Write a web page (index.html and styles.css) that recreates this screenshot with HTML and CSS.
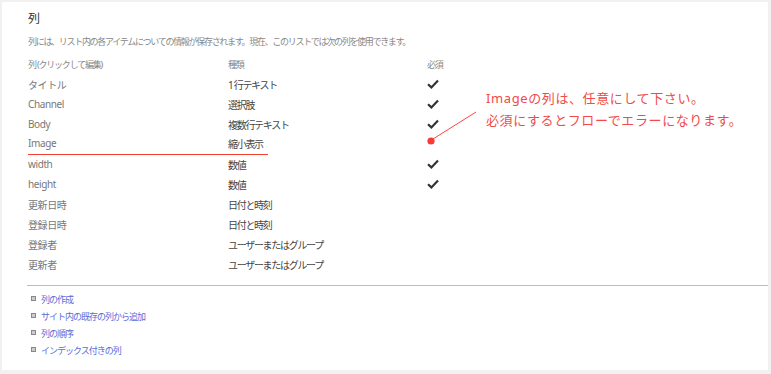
FILE: index.html
```html
<!DOCTYPE html>
<html lang="ja">
<head>
  <meta charset="utf-8">
  <title>列</title>
  <link rel="stylesheet" href="styles.css">
</head>
<body>
  <div class="panel">
    <h2 class="title">列</h2>
    <p class="desc">列には、リスト内の各アイテムについての情報が保存されます。現在、このリストでは次の列を使用できます。</p>

    <div class="cols">
      <div class="row head"><span class="name">列 (クリックして編集)</span><span class="type">種類</span><span class="req">必須</span></div>
      <div class="row"><span class="name">タイトル</span><span class="type">1 行テキスト</span><span class="req"><svg class="check" viewBox="0 0 12 10"><path d="M1 5.2 L4.4 8.4 L11 1.6"/></svg></span></div>
      <div class="row"><span class="name">Channel</span><span class="type">選択肢</span><span class="req"><svg class="check" viewBox="0 0 12 10"><path d="M1 5.2 L4.4 8.4 L11 1.6"/></svg></span></div>
      <div class="row"><span class="name">Body</span><span class="type">複数行テキスト</span><span class="req"><svg class="check" viewBox="0 0 12 10"><path d="M1 5.2 L4.4 8.4 L11 1.6"/></svg></span></div>
      <div class="row marked"><span class="name">Image</span><span class="type">縮小表示</span><span class="req"></span></div>
      <div class="row"><span class="name">width</span><span class="type">数値</span><span class="req"><svg class="check" viewBox="0 0 12 10"><path d="M1 5.2 L4.4 8.4 L11 1.6"/></svg></span></div>
      <div class="row"><span class="name">height</span><span class="type">数値</span><span class="req"><svg class="check" viewBox="0 0 12 10"><path d="M1 5.2 L4.4 8.4 L11 1.6"/></svg></span></div>
      <div class="row"><span class="name">更新日時</span><span class="type">日付と時刻</span><span class="req"></span></div>
      <div class="row"><span class="name">登録日時</span><span class="type">日付と時刻</span><span class="req"></span></div>
      <div class="row"><span class="name">登録者</span><span class="type">ユーザーまたはグループ</span><span class="req"></span></div>
      <div class="row"><span class="name">更新者</span><span class="type">ユーザーまたはグループ</span><span class="req"></span></div>
    </div>

    <hr class="rule">

    <ul class="links">
      <li><a href="#">列の作成</a></li>
      <li><a href="#">サイト内の既存の列から追加</a></li>
      <li><a href="#">列の順序</a></li>
      <li><a href="#">インデックス付きの列</a></li>
    </ul>

    <svg class="pointer" width="60" height="40" viewBox="0 0 60 40">
      <line x1="7" y1="31" x2="50" y2="4"/>
      <circle cx="5" cy="33" r="3.6"/>
    </svg>
    <div class="note">
      Imageの列は、任意にして下さい。<br>
      必須にするとフローでエラーになります。
    </div>
  </div>
</body>
</html>
```

FILE: styles.css
```css
body {
  margin: 0;
  background: #f1f1f1;
  padding: 2px 3px 4px 2px;
  font-family: "Noto Sans", "Noto Sans CJK JP", sans-serif;
  color: #444;
}

.panel {
  position: relative;
  background: #fff;
  height: 368px;
  padding: 9px 0 0 26px;
  box-sizing: border-box;
}

.title {
  margin: 0;
  font-size: 12px;
  line-height: 16px;
  font-weight: normal;
  color: #333;
}

.desc {
  margin: 8px 0 0;
  font-size: 9px;
  line-height: 14px;
  letter-spacing: -1.3px;
  color: #888;
}

.cols {
  margin-top: 5px;
}

.row {
  display: grid;
  grid-template-columns: 200px 199px 1fr;
  height: 20px;
  align-items: center;
  font-size: 10px;
  letter-spacing: -0.4px;
}

.row .name {
  color: #777;
}

.row .type {
  color: #444;
  letter-spacing: -1.3px;
}

.row.head span {
  color: #888;
  letter-spacing: -1.2px;
  font-size: 9px;
}

.check {
  display: block;
  width: 12px;
  height: 10px;
}

.check path {
  fill: none;
  stroke: #333;
  stroke-width: 2.2;
}

/* red underline under the Image row */
.row.marked {
  height: 21px;
  align-items: start;
  padding-top: 2px;
  box-sizing: border-box;
  width: 240px;
  border-bottom: 1px solid #f5402f;
  margin-bottom: -1px;
}

.rule {
  margin: 11px 0 0 -1px;
  border: 0;
  border-top: 1px solid #bbb;
  height: 0;
}

.links {
  list-style: none;
  margin: 0;
  padding: 5px 0 0 3px;
}

.links li {
  height: 17px;
  display: flex;
  align-items: center;
  gap: 5px;
  font-size: 9px;
  letter-spacing: -1px;
}

.links li::before {
  content: "";
  width: 3px;
  height: 3px;
  border: 1px solid #888;
  background: #ccc;
  margin-top: -3px;
}

.links a {
  color: #5a6cd8;
  text-decoration: none;
}

.pointer {
  position: absolute;
  left: 424px;
  top: 106px;
}

.pointer line {
  stroke: #f44;
  stroke-width: 1;
}

.pointer circle {
  fill: #f43a3a;
}

.note {
  position: absolute;
  left: 484px;
  top: 85px;
  font-size: 13px;
  line-height: 22px;
  letter-spacing: 0.6px;
  color: #f24a4a;
}
```
